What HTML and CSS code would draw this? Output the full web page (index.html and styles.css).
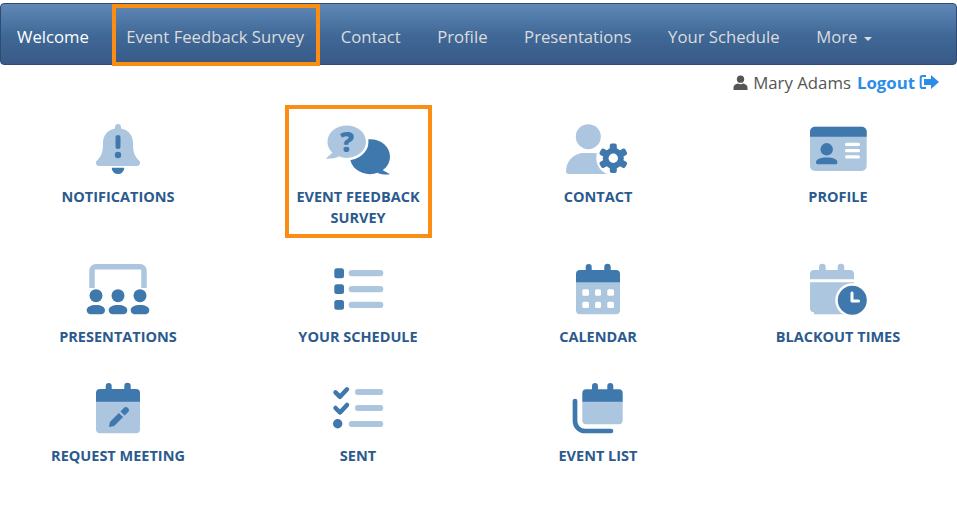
FILE: index.html
```html
<!DOCTYPE html>
<html lang="en">
  <head>
    <meta charset="utf-8">
    <title>Welcome</title>
    <link rel="stylesheet" href="styles.css">
  </head>
  <body>
    <nav class="navbar">
      <a class="nav-link active" href="#">Welcome</a>
      <a class="nav-link marked" href="#">Event Feedback Survey</a>
      <a class="nav-link" href="#">Contact</a>
      <a class="nav-link" href="#">Profile</a>
      <a class="nav-link" href="#">Presentations</a>
      <a class="nav-link" href="#">Your Schedule</a>
      <a class="nav-link" href="#">More <span class="caret"></span></a>
    </nav>

    <div class="userline">
      <svg class="user-icon" viewBox="0 0 16 16"><circle cx="8" cy="4.4" r="3.9"/><path d="M0.5 16v-2.6c0-2.6 2.6-4 4.6-4.4 1.8 1 4 1 5.800 0 2 .4 4.600 1.800 4.600 4.400V16z"/></svg>
      <span class="username">Mary Adams</span>
      <a class="logout" href="#">Logout</a>
      <svg class="logout-icon" viewBox="0 0 20 16"><path class="outline" d="M7 2H3.500A1.800 1.800 0 0 0 1.700 3.800v8.400A1.800 1.800 0 0 0 3.500 14H7"/><path class="arrow" d="M12 1l8 7-8 7v-4H5V5h7z"/></svg>
    </div>

    <main class="tiles">
      <a class="tile" href="#">
        <svg viewBox="0 0 70 56"><path class="l" d="M35 2a3 3 0 0 1 3 3v1.500c7.500 1.500 12 7 12 14.500 0 8.500 1 12.500 6 17.500 2 2 1 5.500-2 5.500H16c-3 0-4-3.500-2-5.500 5-5 6-9 6-17.500 0-7.500 4.500-13 12-14.500V5a3 3 0 0 1 3-3z"/><path class="d" d="M28.700 45.700h12.600a6.300 6.300 0 0 1-12.600 0zM32.500 15.500a2.500 2.500 0 0 1 5 0v9a2.500 2.500 0 0 1-5 0z"/><circle class="d" cx="35" cy="33" r="3.200"/></svg>
        <span class="tile-label">Notifications</span>
      </a>
      <a class="tile marked" href="#">
        <svg viewBox="0 0 70 56"><ellipse class="d" cx="47" cy="34.700" rx="20" ry="17.500"/><path class="d" d="M56 46l11 6.200c-3 .5-8 .5-12-1z"/><ellipse class="l halo" cx="23.700" cy="19.700" rx="20.500" ry="17.500"/><path class="l" d="M10 30l-7 6.500c3 .5 9 0 13-2z"/><text class="qmark" x="24" y="29.500" text-anchor="middle">?</text></svg>
        <span class="tile-label">Event Feedback Survey</span>
      </a>
      <a class="tile" href="#">
        <svg viewBox="0 0 70 56"><circle class="l" cx="25.300" cy="14.700" r="12.500"/><path class="l" d="M3 49c0-10 8-18 18-18h9c8 0 14 6 15 21H6a3 3 0 0 1-3-3z"/><circle class="w" cx="50.300" cy="36.300" r="17"/><g class="d"><circle cx="50.300" cy="36.300" r="10.500"/><rect x="46.800" y="21.500" width="7" height="29.600" rx="2"/><rect x="46.800" y="21.500" width="7" height="29.600" rx="2" transform="rotate(60 50.300 36.300)"/><rect x="46.800" y="21.500" width="7" height="29.600" rx="2" transform="rotate(120 50.300 36.300)"/></g><circle class="w" cx="50.300" cy="36.300" r="4.700"/></svg>
        <span class="tile-label">Contact</span>
      </a>
      <a class="tile" href="#">
        <svg viewBox="0 0 70 56"><rect class="l" x="7" y="4.700" width="56.700" height="44.300" rx="5"/><path class="d" d="M7 14.700V9.700a5 5 0 0 1 5-5h46.700a5 5 0 0 1 5 5v5z"/><circle class="d" cx="23.700" cy="27.300" r="6.200"/><path class="d" d="M13 40.500c0-3.500 4-5 10.700-5s10.700 1.500 10.700 5c0 1-.6 1.800-1.800 1.800H14.800c-1.200 0-1.800-.8-1.800-1.800z"/><rect class="w" x="42" y="20.700" width="15" height="3.300" rx="1.500"/><rect class="w" x="42" y="27" width="15" height="3.300" rx="1.500"/><rect class="w" x="42" y="33.300" width="15" height="3.300" rx="1.500"/></svg>
        <span class="tile-label">Profile</span>
      </a>

      <a class="tile" href="#">
        <svg viewBox="0 0 70 56"><path class="frame" d="M9 26V8.500a3.700 3.700 0 0 1 3.700-3.700h44.600A3.700 3.700 0 0 1 61 8.500V26"/><g class="d"><circle cx="13" cy="33.700" r="6.500"/><circle cx="35" cy="33.700" r="6.500"/><circle cx="57" cy="33.700" r="6.500"/><path d="M3.700 48c0-3 4-5 9.200-5s9.100 2 9.100 5c0 3-2 4.300-4 4.300H7.700c-2 0-4-1.300-4-4.300z"/><path d="M25.700 48c0-3 4-5 9.300-5s9.300 2 9.300 5c0 3-2 4.300-4 4.300H29.700c-2 0-4-1.300-4-4.300z"/><path d="M47.700 48c0-3 4-5 9.300-5s9.300 2 9.300 5c0 3-2 4.300-4 4.300H51.700c-2 0-4-1.300-4-4.300z"/></g></svg>
        <span class="tile-label">Presentations</span>
      </a>
      <a class="tile" href="#">
        <svg viewBox="0 0 70 56"><g class="d"><rect x="11.300" y="6.300" width="9.700" height="10" rx="2.500"/><rect x="11.300" y="22.300" width="9.700" height="9.700" rx="2.500"/><rect x="11.300" y="38" width="9.700" height="9.700" rx="2.500"/></g><g class="l"><rect x="25.700" y="8" width="34.600" height="6.300" rx="3.100"/><rect x="25.700" y="24" width="34.600" height="6.300" rx="3.100"/><rect x="25.700" y="39.700" width="34.600" height="6.300" rx="3.100"/></g></svg>
        <span class="tile-label">Your Schedule</span>
      </a>
      <a class="tile" href="#">
        <svg viewBox="0 0 70 56"><path class="l" d="M13 20h44v28.300a4 4 0 0 1-4 4H17a4 4 0 0 1-4-4z"/><path class="d" d="M13 20.300V12a4 4 0 0 1 4-4h5.700V5a3 3 0 0 1 6 0v3h12.600V5a3.200 3.200 0 0 1 6.400 0v3H53a4 4 0 0 1 4 4v8.300z"/><g class="w"><rect x="19.300" y="27.300" width="6.700" height="6.400" rx="1.500"/><rect x="32" y="27.300" width="6" height="6.400" rx="1.500"/><rect x="44.300" y="27.300" width="6.700" height="6.400" rx="1.500"/><rect x="19.300" y="39.700" width="6.700" height="6.300" rx="1.500"/><rect x="32" y="39.700" width="6" height="6.300" rx="1.500"/><rect x="44.300" y="39.700" width="6.700" height="6.300" rx="1.500"/></g></svg>
        <span class="tile-label">Calendar</span>
      </a>
      <a class="tile" href="#">
        <svg viewBox="0 0 70 56"><path class="l" d="M7 17.300V12a4 4 0 0 1 4-4h5V5a3.300 3.300 0 0 1 6.700 0v3h12V5a3.300 3.300 0 0 1 6.600 0v3H47a4 4 0 0 1 4 4v5.300z"/><path class="l" d="M7 20.300h44v30H11a4 4 0 0 1-4-4z"/><path class="l" d="M11 52.300h30v-6H11z"/><circle class="w" cx="49.300" cy="38.300" r="17"/><circle class="d" cx="49.300" cy="38.300" r="14.500"/><path class="hands" d="M49 31v8h6.500"/></svg>
        <span class="tile-label">Blackout Times</span>
      </a>

      <a class="tile" href="#">
        <svg viewBox="0 0 70 56"><path class="l" d="M13 20h44v28.300a4 4 0 0 1-4 4H17a4 4 0 0 1-4-4z"/><path class="d" d="M13 20.700V12a4 4 0 0 1 4-4h5.700V5a3 3 0 0 1 6 0v3h12.600V5a3.200 3.200 0 0 1 6.400 0v3H53a4 4 0 0 1 4 4v8.700z"/><path class="d" d="M26 46l.9-5.100 9-9 4.200 4.200-9 9zM37.400 30.400l3.400-3.400a2.970 2.970 0 0 1 4.200 4.200l-3.400 3.400z"/></svg>
        <span class="tile-label">Request Meeting</span>
      </a>
      <a class="tile" href="#">
        <svg viewBox="0 0 70 56"><path class="check" d="M12.500 11.300l4.500 4.500 7-7.500M12.500 27l4.500 4.500 7-7.500"/><circle class="d" cx="14.700" cy="42.700" r="4.700"/><g class="l"><rect x="32" y="8" width="28.300" height="6" rx="3"/><rect x="32" y="24" width="28.300" height="6" rx="3"/><rect x="25.700" y="40" width="34.600" height="6" rx="3"/></g></svg>
        <span class="tile-label">Sent</span>
      </a>
      <a class="tile" href="#">
        <svg viewBox="0 0 70 56"><path class="shelf" d="M12 20v20a10 10 0 0 0 10 10h26"/><path class="l" d="M19.300 20h40.400v19.300a4 4 0 0 1-4 4H23.300a4 4 0 0 1-4-4z"/><path class="d" d="M19.300 20.700V12.300a4 4 0 0 1 4-4H29V5a3 3 0 0 1 6 0v3.300h9.300V5a3 3 0 0 1 6 0v3.300h5.400a4 4 0 0 1 4 4v8.400z"/></svg>
        <span class="tile-label">Event List</span>
      </a>
    </main>
  </body>
</html>
```

FILE: styles.css
```css
body {
    margin: 0;
    font-family: 'Open Sans', sans-serif;
    color: #555;
    background-color: white;
    overflow-x: hidden;
}

a {
    text-decoration: none;
}

/* top bar */
.navbar {
    display: flex;
    align-items: stretch;
    height: 60px;
    margin-top: 3px;
    border: 1px solid #2f4b72;
    border-radius: 4px;
    background: linear-gradient(#5f88b6, #3f6796 55%, #395a87);
}
.nav-link {
    position: relative;
    padding: 4px 18.3px 0;
    line-height: 58px;
    font-size: 16.7px;
    color: #dcdcdc;
}
.nav-link:first-child {
    padding-left: 16px;
    padding-right: 19px;
}
.active {
    color: white;
}
.caret {
    display: inline-block;
    margin-left: 2px;
    vertical-align: middle;
    border-top: 4px solid #dcdcdc;
    border-left: 4px solid transparent;
    border-right: 4px solid transparent;
}

/* orange annotation boxes */
.marked::after {
    content: "";
    position: absolute;
    border: 4.4px solid #fb8c14;
}
.nav-link.marked::after {
    top: 0;
    bottom: -2px;
    left: 4px;
    right: 2.5px;
}
.tile.marked::after {
    top: -17px;
    bottom: -10px;
    left: 47px;
    right: 46px;
}

/* logged in user */
.userline {
    display: flex;
    justify-content: flex-end;
    align-items: center;
    height: 24px;
    margin-top: 5px;
    padding-right: 18px;
    font-size: 16.8px;
}
.user-icon {
    width: 15px;
    height: 15px;
    margin-right: 5px;
    fill: #555;
}
.username {
    margin-right: 6px;
}
.logout {
    font-weight: 700;
    color: #2b8de8;
}
.logout-icon {
    width: 20px;
    height: 16px;
    margin-left: 4px;
}
.outline {
    fill: none;
    stroke: #2b8de8;
    stroke-width: 2;
}
.arrow {
    fill: #2b8de8;
}

/* icon grid */
.tiles {
    display: grid;
    grid-template-columns: repeat(4, 240px);
    row-gap: 34px;
    margin: 28px 0 0 -2px;
}
.tile {
    position: relative;
    padding: 0 50px;
    text-align: center;
}
.tile svg {
    display: block;
    width: 70px;
    height: 56px;
    margin: 0 auto 8px;
}
.tile-label {
    display: block;
    font-size: 14.5px;
    font-weight: 700;
    line-height: 21px;
    text-transform: uppercase;
    color: #2b5a8e;
}

/* icon colours */
.d { fill: #3f78ad; }
.l { fill: #adc6df; }
.w { fill: white; }
.halo {
    stroke: white;
    stroke-width: 2.5;
}
.qmark {
    font-family: 'Open Sans', sans-serif;
    font-size: 28px;
    font-weight: 800;
    fill: #3f78ad;
}
.frame {
    fill: none;
    stroke: #adc6df;
    stroke-width: 5.5;
}
.hands {
    fill: none;
    stroke: white;
    stroke-width: 3;
    stroke-linecap: round;
    stroke-linejoin: round;
}
.check {
    fill: none;
    stroke: #3f78ad;
    stroke-width: 4.5;
    stroke-linecap: round;
    stroke-linejoin: round;
}
.shelf {
    fill: none;
    stroke: #3f78ad;
    stroke-width: 4.7;
    stroke-linecap: round;
}
```
